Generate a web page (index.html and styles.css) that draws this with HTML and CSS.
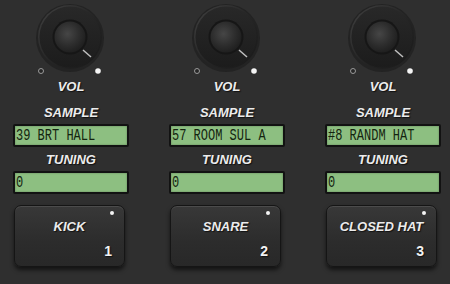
FILE: index.html
```html
<!DOCTYPE html>
<html>
<head>
    <title>Drum Channels</title>
    <link rel="stylesheet" href="styles.css">
</head>
<body>
    <div class="rack">
        <div class="channel">
            <svg class="knob" width="116" height="78" viewBox="0 0 116 78">
                <defs>
                    <linearGradient id="rim" x1="0" y1="0" x2="1" y2="1">
                        <stop offset="0" stop-color="#424242"/>
                        <stop offset="0.5" stop-color="#262626"/>
                        <stop offset="1" stop-color="#181818"/>
                    </linearGradient>
                    <linearGradient id="face" x1="0" y1="0" x2="0" y2="1">
                        <stop offset="0" stop-color="#282828"/>
                        <stop offset="1" stop-color="#1c1c1c"/>
                    </linearGradient>
                    <radialGradient id="cap" cx="0.42" cy="0.4" r="0.65">
                        <stop offset="0" stop-color="#464646"/>
                        <stop offset="0.55" stop-color="#2e2e2e"/>
                        <stop offset="1" stop-color="#1d1d1d"/>
                    </radialGradient>
                </defs>
                <circle cx="57" cy="38" r="34" fill="#232323"/>
                <circle cx="57" cy="37" r="32" fill="url(#rim)"/>
                <circle cx="57" cy="37" r="30.5" fill="url(#face)"/>
                <circle cx="57" cy="37" r="17.5" fill="#161616"/>
                <circle cx="57" cy="37" r="15.5" fill="url(#cap)"/>
                <line x1="70" y1="50" x2="78" y2="57" stroke="#c0c0c0" stroke-width="1.5"/>
                <circle cx="28" cy="71" r="2.5" fill="#262626" stroke="#9a9a9a" stroke-width="1"/>
                <circle cx="85" cy="71" r="2.8" fill="#f4f4f4"/>
            </svg>
            <div class="label">VOL</div>
            <div class="label gap-top">SAMPLE</div>
            <div class="lcd"><span>39 BRT HALL</span></div>
            <div class="label">TUNING</div>
            <div class="lcd"><span>0</span></div>
            <div class="pad">
                <span class="led"></span>
                <span class="pad-name">KICK</span>
                <span class="pad-num">1</span>
            </div>
        </div>
        <div class="channel">
            <svg class="knob" width="116" height="78" viewBox="0 0 116 78">
                <circle cx="57" cy="38" r="34" fill="#232323"/>
                <circle cx="57" cy="37" r="32" fill="url(#rim)"/>
                <circle cx="57" cy="37" r="30.5" fill="url(#face)"/>
                <circle cx="57" cy="37" r="17.5" fill="#161616"/>
                <circle cx="57" cy="37" r="15.5" fill="url(#cap)"/>
                <line x1="70" y1="50" x2="78" y2="57" stroke="#c0c0c0" stroke-width="1.5"/>
                <circle cx="28" cy="71" r="2.5" fill="#262626" stroke="#9a9a9a" stroke-width="1"/>
                <circle cx="85" cy="71" r="2.8" fill="#f4f4f4"/>
            </svg>
            <div class="label">VOL</div>
            <div class="label gap-top">SAMPLE</div>
            <div class="lcd"><span>57 ROOM SUL A</span></div>
            <div class="label">TUNING</div>
            <div class="lcd"><span>0</span></div>
            <div class="pad">
                <span class="led"></span>
                <span class="pad-name">SNARE</span>
                <span class="pad-num">2</span>
            </div>
        </div>
        <div class="channel">
            <svg class="knob" width="116" height="78" viewBox="0 0 116 78">
                <circle cx="57" cy="38" r="34" fill="#232323"/>
                <circle cx="57" cy="37" r="32" fill="url(#rim)"/>
                <circle cx="57" cy="37" r="30.5" fill="url(#face)"/>
                <circle cx="57" cy="37" r="17.5" fill="#161616"/>
                <circle cx="57" cy="37" r="15.5" fill="url(#cap)"/>
                <line x1="70" y1="50" x2="78" y2="57" stroke="#c0c0c0" stroke-width="1.5"/>
                <circle cx="28" cy="71" r="2.5" fill="#262626" stroke="#9a9a9a" stroke-width="1"/>
                <circle cx="85" cy="71" r="2.8" fill="#f4f4f4"/>
            </svg>
            <div class="label">VOL</div>
            <div class="label gap-top">SAMPLE</div>
            <div class="lcd"><span>#8 RANDM HAT</span></div>
            <div class="label">TUNING</div>
            <div class="lcd"><span>0</span></div>
            <div class="pad">
                <span class="led"></span>
                <span class="pad-name">CLOSED HAT</span>
                <span class="pad-num">3</span>
            </div>
        </div>
    </div>
</body>
</html>
```

FILE: styles.css
```css
body {
    margin: 0;
    width: 450px;
    height: 284px;
    overflow: hidden;
    background: #2f2f2f;
    font-family: "Liberation Sans", Arial, sans-serif;
}
.rack {
    display: flex;
    gap: 40px;
    padding-left: 13px;
}
.channel {
    width: 116px;
    display: flex;
    flex-direction: column;
}
.knob {
    display: block;
}
.label {
    height: 14px;
    line-height: 14px;
    margin-top: 2px;
    text-align: center;
    font-size: 13px;
    font-weight: bold;
    font-style: italic;
    color: #ececec;
    text-shadow: 1px 1px 1px #111;
}
.label.gap-top {
    margin-top: 12px;
}
.lcd {
    box-sizing: border-box;
    height: 23px;
    margin-top: 4px;
    margin-bottom: 4px;
    border: 2px solid #121212;
    border-radius: 2px;
    background: #8dbf81;
    box-shadow: inset 0 0 2px rgba(0, 0, 0, 0.35);
    overflow: hidden;
    display: flex;
    align-items: center;
    padding-left: 1px;
}
.lcd span {
    display: inline-block;
    font-family: "Liberation Mono", "DejaVu Sans Mono", monospace;
    font-size: 12px;
    line-height: 12px;
    color: #14240f;
    white-space: pre;
    transform: scaleY(1.45);
}
.pad {
    box-sizing: border-box;
    width: 111px;
    height: 62px;
    margin-top: 7px;
    margin-left: 1px;
    border: 1px solid #151515;
    border-radius: 7px;
    background: linear-gradient(#383838, #2c2c2c 60%, #282828);
    box-shadow: 0 3px 4px rgba(0, 0, 0, 0.6), inset 0 1px 0 rgba(255, 255, 255, 0.1);
    display: flex;
    flex-direction: column;
}
.led {
    align-self: flex-end;
    width: 4px;
    height: 4px;
    margin: 5px 10px 0 0;
    border-radius: 50%;
    background: #f4f4f4;
}
.pad-name {
    margin-top: 5px;
    line-height: 14px;
    text-align: center;
    font-size: 13px;
    font-weight: bold;
    font-style: italic;
    color: #ececec;
    text-shadow: 1px 1px 1px #111;
}
.pad-num {
    align-self: flex-end;
    margin: 9px 12px 0 0;
    line-height: 16px;
    font-size: 14px;
    font-weight: bold;
    color: #f2f2f2;
    text-shadow: 1px 1px 1px #111;
}
```
